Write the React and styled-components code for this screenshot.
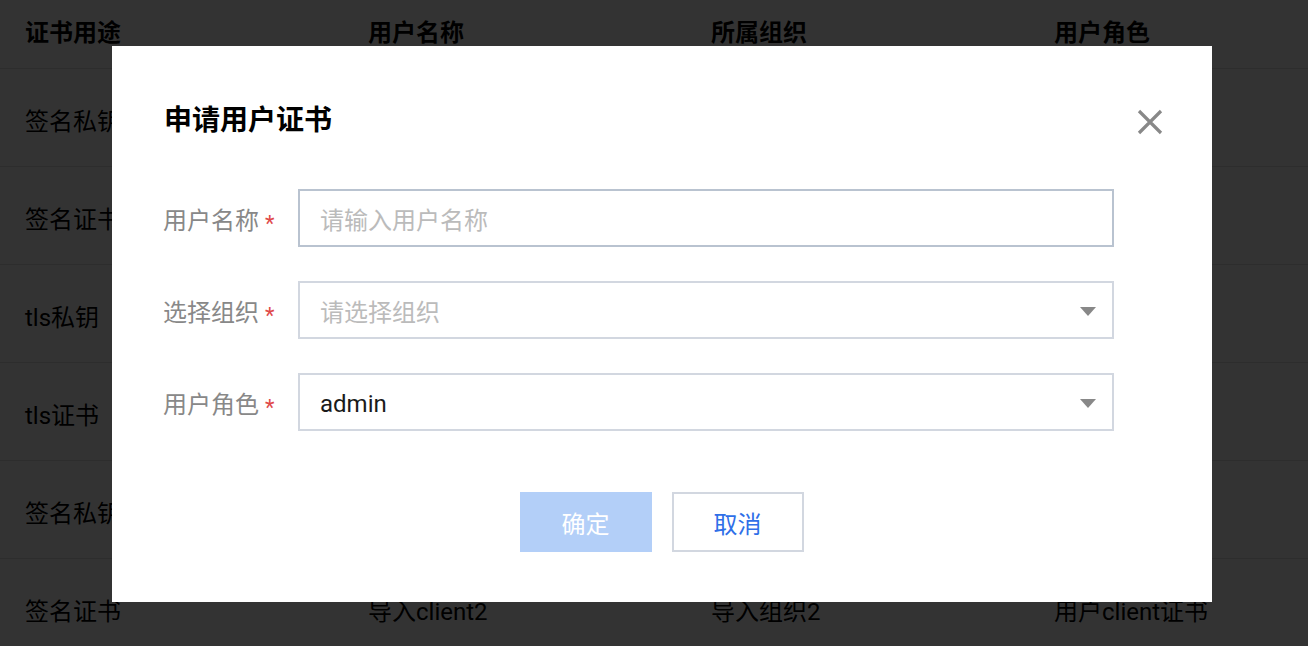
import React from 'react';
import styled, { createGlobalStyle } from 'styled-components';

const GlobalStyle = createGlobalStyle`
  html, body {
    margin: 0;
    padding: 0;
    background: #fff;
    font-family: Roboto, 'Noto Sans CJK SC', sans-serif;
    overflow: hidden;
  }
`;

const Page = styled.div`
  position: relative;
  width: 1308px;
  height: 646px;
  overflow: hidden;
`;

const Table = styled.div`
  display: flex;
  flex-direction: column;
`;

const Row = styled.div`
  display: grid;
  grid-template-columns: repeat(4, 343px);
  height: ${({ $head }) => ($head ? '68px' : '97px')};
  align-items: center;
  border-bottom: 1px solid #e2e2e2;
  font-size: 24px;
  font-weight: ${({ $head }) => ($head ? 700 : 400)};
  color: #000;
`;

const Cell = styled.div`
  padding-left: 25px;
  padding-top: ${({ $head }) => ($head ? '0' : '4px')};
  padding-bottom: ${({ $head }) => ($head ? '8px' : '0')};
  white-space: nowrap;
`;

const Overlay = styled.div`
  position: absolute;
  inset: 0;
  background: rgba(0, 0, 0, 0.8);
  display: flex;
  align-items: center;
  justify-content: center;
  padding-left: 16px;
  padding-top: 2px;
`;

const Modal = styled.div`
  position: relative;
  width: 1100px;
  box-sizing: border-box;
  background: #fff;
  padding: 55px 98px 50px 51px;
  display: flex;
  flex-direction: column;
`;

const Title = styled.h2`
  margin: 0 0 48px 1px;
  font-size: 28px;
  line-height: 40px;
  font-weight: 700;
  color: #000;
`;

const Close = styled.button`
  position: absolute;
  top: 62px;
  right: 48px;
  width: 28px;
  height: 28px;
  padding: 0;
  border: 0;
  background: none;
  display: flex;
  align-items: center;
  justify-content: center;
  cursor: pointer;
`;

const Form = styled.div`
  display: flex;
  flex-direction: column;
  gap: 34px;
`;

const Field = styled.div`
  display: flex;
  align-items: center;
`;

const Label = styled.label`
  width: 135px;
  flex: none;
  font-size: 24px;
  color: #888;
  white-space: nowrap;
`;

const Star = styled.span`
  color: #e04a4a;
  margin-left: 6px;
  font-size: 22px;
  position: relative;
  top: 2px;
`;

const Box = styled.div`
  flex: 1;
  position: relative;
  height: 58px;
  box-sizing: border-box;
  border: 2px solid ${({ $focused }) => ($focused ? '#b9c3d0' : '#d2d7e0')};
  display: flex;
  align-items: center;
  padding: ${({ $placeholder }) => ($placeholder ? '0 20px' : '4px 20px 0')};
  font-size: 24px;
  color: ${({ $placeholder }) => ($placeholder ? '#bbb' : '#1a1a1a')};
`;

const Caret = styled.span`
  position: absolute;
  right: 16px;
  top: 50%;
  margin-top: -3px;
  width: 0;
  height: 0;
  border-left: 8px solid transparent;
  border-right: 8px solid transparent;
  border-top: 9px solid #888;
`;

const Actions = styled.div`
  display: flex;
  justify-content: center;
  gap: 20px;
  margin-top: 61px;
  margin-right: -46px;
`;

const Button = styled.button`
  width: 132px;
  height: 60px;
  box-sizing: border-box;
  font-family: inherit;
  font-size: 24px;
  cursor: pointer;
  border: ${({ $primary }) => ($primary ? '0' : '2px solid #d2d7e0')};
  background: ${({ $primary }) => ($primary ? '#b3cff8' : '#fff')};
  color: ${({ $primary }) => ($primary ? '#fff' : '#2f6fe8')};
`;

const header = ['证书用途', '用户名称', '所属组织', '用户角色'];
const rows = [
  ['签名私钥', '导入client1', '导入组织1', '用户client私钥'],
  ['签名证书', '导入client1', '导入组织1', '用户client证书'],
  ['tls私钥', '导入client1', '导入组织1', '用户tls私钥'],
  ['tls证书', '导入client1', '导入组织1', '用户tls证书'],
  ['签名私钥', '导入client2', '导入组织2', '用户client私钥'],
  ['签名证书', '导入client2', '导入组织2', '用户client证书'],
];

const fields = [
  { label: '用户名称', value: '请输入用户名称', placeholder: true, focused: true },
  { label: '选择组织', value: '请选择组织', placeholder: true, select: true },
  { label: '用户角色', value: 'admin', select: true },
];

const App = () => (
  <Page>
    <GlobalStyle />
    <Table>
      <Row $head>
        {header.map((h) => (
          <Cell key={h} $head>{h}</Cell>
        ))}
      </Row>
      {rows.map((r, i) => (
        <Row key={i}>
          {r.map((c, j) => (
            <Cell key={j}>{c}</Cell>
          ))}
        </Row>
      ))}
    </Table>

    <Overlay>
      <Modal>
        <Title>申请用户证书</Title>
        <Close aria-label="关闭">
          <svg width="26" height="26" viewBox="0 0 26 26">
            <path d="M2 2 L24 24 M24 2 L2 24" stroke="#888" strokeWidth="3.2" fill="none" />
          </svg>
        </Close>

        <Form>
          {fields.map((f) => (
            <Field key={f.label}>
              <Label>
                {f.label}
                <Star>*</Star>
              </Label>
              <Box $placeholder={f.placeholder} $focused={f.focused}>
                {f.value}
                {f.select && <Caret />}
              </Box>
            </Field>
          ))}
        </Form>

        <Actions>
          <Button $primary>确定</Button>
          <Button>取消</Button>
        </Actions>
      </Modal>
    </Overlay>
  </Page>
);

export default App;
